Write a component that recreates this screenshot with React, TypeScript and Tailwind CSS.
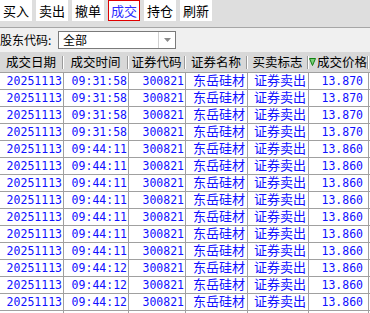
import React from "react";

const rows = [
  ["09:31:58", "13.870"],
  ["09:31:58", "13.870"],
  ["09:31:58", "13.870"],
  ["09:31:58", "13.870"],
  ["09:44:11", "13.860"],
  ["09:44:11", "13.860"],
  ["09:44:11", "13.860"],
  ["09:44:11", "13.860"],
  ["09:44:11", "13.860"],
  ["09:44:11", "13.860"],
  ["09:44:11", "13.860"],
  ["09:44:12", "13.860"],
  ["09:44:12", "13.860"],
  ["09:44:12", "13.860"],
  ["", ""],
];

const cjk = "[font-family:'Noto_Sans_CJK_SC',sans-serif]";
const mono = "[font-family:'DejaVu_Sans_Mono','Noto_Sans_CJK_SC',monospace]";

function Btn({ label, active }: { label: string; active?: boolean }) {
  return (
    <div
      className={
        "w-[32px] h-[21px] bg-white flex items-center justify-center text-[13px] leading-[16px] " +
        (active ? "border border-[#e00000] text-[#2a2aff]" : "text-black")
      }
    >
      {label}
    </div>
  );
}

function Head({ w, children }: { w: string; children: React.ReactNode }) {
  return (
    <div className={"flex items-center h-full shrink-0 " + w}>
      <div className="flex-1 flex items-center justify-center">{children}</div>
      <span className="w-px h-[13px] bg-[#9a9a9a]" />
      <span className="w-px h-[13px] bg-white" />
    </div>
  );
}

export default function App() {
  return (
    <div className={"w-[370px] h-[313px] overflow-hidden bg-[#f0f0f0] " + cjk}>
      <div className="h-[28px] bg-[#dedede] border-b border-[#a6a6a6] flex gap-[4px]">
        <Btn label="买入" />
        <Btn label="卖出" />
        <Btn label="撤单" />
        <Btn label="成交" active />
        <Btn label="持仓" />
        <Btn label="刷新" />
      </div>

      <div className="h-[24px] flex items-center">
        <span className="w-[58px] text-[12px] text-black leading-[16px] whitespace-nowrap">股东代码:</span>
        <div className="w-[118px] h-[18px] bg-white border border-[#7a7a7a] flex items-center">
          <span className="flex-1 pl-[4px] text-[12px] leading-[16px] text-black">全部</span>
          <div className="w-[17px] h-full border-l border-[#d0d0d0] flex items-center justify-center">
            <svg width="7" height="4" viewBox="0 0 7 4">
              <polygon points="0,0 7,0 3.5,4" fill="#8a8a8a" />
            </svg>
          </div>
        </div>
      </div>

      <div className="h-[21px] bg-[#d8d8d8] border-b border-[#a0a0a0] flex text-[12.5px] leading-[16px] text-black whitespace-nowrap">
        <Head w="w-[64px]">成交日期</Head>
        <Head w="w-[65px]">成交时间</Head>
        <Head w="w-[57px]">证券代码</Head>
        <Head w="w-[62px]">证券名称</Head>
        <Head w="w-[61px]">买卖标志</Head>
        <Head w="w-[60px]">
          <svg width="7" height="8" viewBox="0 0 7 8" className="mr-px">
            <polygon points="0.5,0.5 6.5,0.5 3.5,7.5" fill="#7ad07a" stroke="#108010" strokeWidth="1" />
          </svg>
          成交价格
        </Head>
      </div>

      <div className="bg-white">
        {rows.map(([time, price], i) => (
          <div key={i} className="h-[17px] flex border-b border-[#a0a0a0] text-[#1010ff] whitespace-nowrap">
            <div className={"w-[64px] shrink-0 border-r border-[#a0a0a0] flex items-center justify-end pr-[1px] text-[11.5px] leading-[14px] " + mono}>
              {time && "20251113"}
            </div>
            <div className={"w-[65px] shrink-0 border-r border-[#a0a0a0] flex items-center justify-end pr-[1px] text-[11.5px] leading-[14px] " + mono}>
              {time}
            </div>
            <div className={"w-[57px] shrink-0 border-r border-[#a0a0a0] flex items-center justify-end pr-[1px] text-[11.5px] leading-[14px] " + mono}>
              {time && "300821"}
            </div>
            <div className="w-[62px] shrink-0 border-r border-[#a0a0a0] flex items-center justify-end pr-[2px] pb-[2px] text-[13px] leading-[14px]">
              {time && "东岳硅材"}
            </div>
            <div className="w-[61px] shrink-0 border-r border-[#a0a0a0] flex items-center justify-end pr-[2px] pb-[2px] text-[13px] leading-[14px]">
              {time && "证券卖出"}
            </div>
            <div className={"w-[60px] shrink-0 border-r border-[#a0a0a0] flex items-center justify-end pr-[5px] text-[11.5px] leading-[14px] " + mono}>
              {price}
            </div>
            <div className="flex-1" />
          </div>
        ))}
      </div>
    </div>
  );
}
